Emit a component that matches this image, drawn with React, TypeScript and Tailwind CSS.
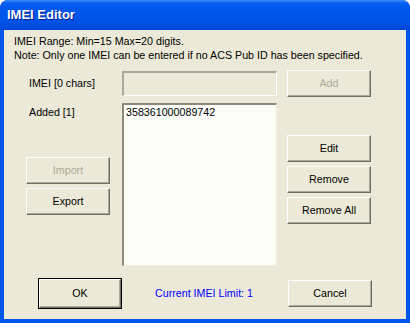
import React from 'react';

const font = { fontFamily: '"Liberation Sans", Arial, sans-serif' };

function XpButton({
  label,
  disabled = false,
  isDefault = false,
  className = '',
}: {
  label: string;
  disabled?: boolean;
  isDefault?: boolean;
  className?: string;
}) {
  const inner = (
    <div
      className={`flex h-full w-full items-center justify-center border-t border-l border-t-white border-l-white border-r border-b border-r-[#716f64] border-b-[#716f64] bg-[#ece9d8] shadow-[inset_-1px_-1px_0_#aca899] ${
        disabled ? 'text-[#aca899]' : 'text-black'
      }`}
    >
      {label}
    </div>
  );
  if (isDefault) {
    return <div className={`border border-black ${className}`}>{inner}</div>;
  }
  return <div className={className}>{inner}</div>;
}

export default function App() {
  return (
    <div className="h-[323px] w-[410px] overflow-hidden" style={font}>
      <div className="flex h-full w-full flex-col overflow-hidden rounded-t-[8px] bg-[#0055ea]">
        {/* title bar */}
        <div className="flex h-[30px] shrink-0 items-center bg-[linear-gradient(to_bottom,#3d8df7_0px,#0a61f2_3px,#0058ee_8px,#0055ea_18px,#004fe0_26px,#0042d4_30px)] pl-[7px]">
          <span className="text-[13px] font-bold text-white [text-shadow:1px_1px_0_#0a1e8c]">IMEI Editor</span>
        </div>

        {/* client area */}
        <div className="mx-[4px] mb-[4px] flex flex-1 flex-col bg-[#ece9d8] text-[10.7px] text-black">
          <div className="pl-[10px] pt-[4px] leading-[14px]">
            <div>IMEI Range: Min=15 Max=20 digits.</div>
            <div>Note: Only one IMEI can be entered if no ACS Pub ID has been specified.</div>
          </div>

          {/* IMEI input row */}
          <div className="mt-[8px] flex h-[27px] items-center">
            <div className="w-[118px] pl-[25px]">IMEI [0 chars]</div>
            <div className="h-[25px] w-[155px] border-t-2 border-l-2 border-t-[#aca899] border-l-[#aca899] border-r border-b border-r-white border-b-white bg-[#ece9d8]" />
            <XpButton label="Add" disabled className="ml-[10px] h-[27px] w-[84px]" />
          </div>

          {/* list row */}
          <div className="mt-[6px] flex">
            <div className="flex w-[118px] flex-col">
              <div className="pl-[25px] pt-[2px] leading-[14px]">Added [1]</div>
              <div className="mt-[38px] flex flex-col gap-[4px] pl-[22px]">
                <XpButton label="Import" disabled className="h-[27px] w-[84px]" />
                <XpButton label="Export" className="h-[27px] w-[84px]" />
              </div>
            </div>
            <div className="h-[163px] w-[155px] border-t-2 border-l-2 border-t-[#8d8a7c] border-l-[#8d8a7c] border-r border-b border-r-[#f1efe2] border-b-[#f1efe2] bg-[#fcfdf9] pl-[2px] leading-[14px]">
              358361000089742
            </div>
            <div className="ml-[10px] mt-[32px] flex flex-col gap-[4px]">
              <XpButton label="Edit" className="h-[27px] w-[84px]" />
              <XpButton label="Remove" className="h-[27px] w-[84px]" />
              <XpButton label="Remove All" className="h-[27px] w-[84px]" />
            </div>
          </div>

          {/* bottom row */}
          <div className="mt-[12px] flex h-[31px] items-center">
            <XpButton label="OK" isDefault className="ml-[34px] h-[31px] w-[84px]" />
            <div className="ml-[33px] w-[133px] text-[#0000ff]">Current IMEI Limit: 1</div>
            <XpButton label="Cancel" className="h-[27px] w-[84px]" />
          </div>
        </div>
      </div>
    </div>
  );
}
